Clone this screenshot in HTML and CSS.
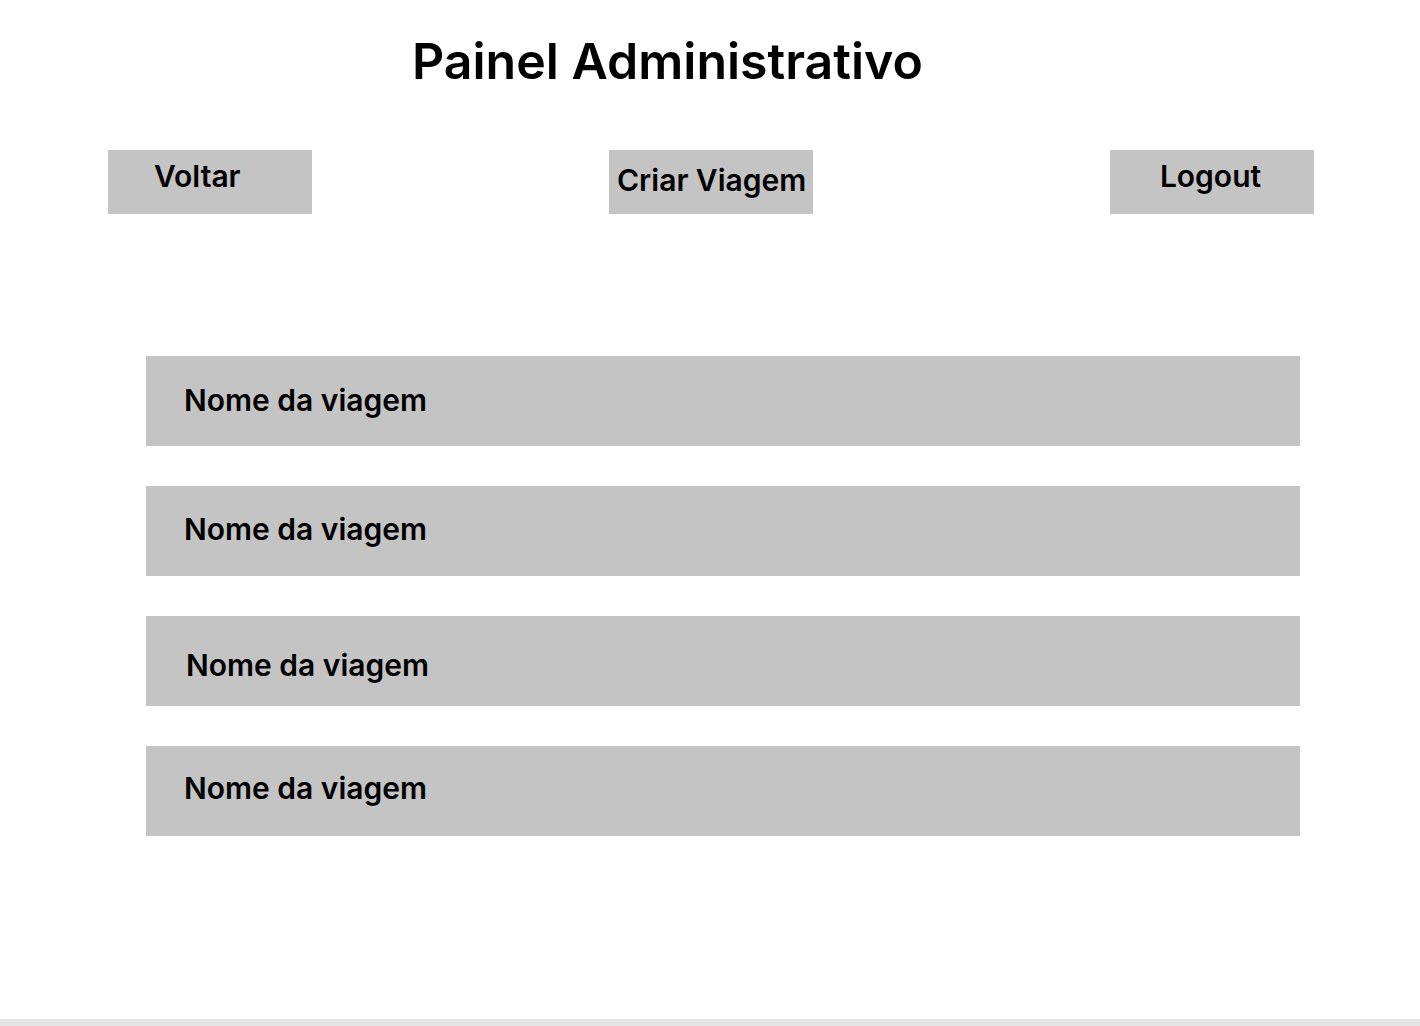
FILE: index.html
```html
<!DOCTYPE html>
<html lang="pt">
<head>
<meta charset="utf-8">
<title>Painel Administrativo</title>
<link rel="stylesheet" href="styles.css">
</head>
<body>
<div class="frame">
  <h1 class="title">Painel Administrativo</h1>
  <div class="actions">
    <button class="btn btn-voltar">Voltar</button>
    <button class="btn btn-criar">Criar Viagem</button>
    <button class="btn btn-logout">Logout</button>
  </div>
  <ul class="trips">
    <li class="trip trip-a">Nome da viagem</li>
    <li class="trip trip-b">Nome da viagem</li>
    <li class="trip trip-c">Nome da viagem</li>
    <li class="trip trip-d">Nome da viagem</li>
  </ul>
</div>
</body>
</html>
```

FILE: styles.css
```css
html, body {
  margin: 0;
  padding: 0;
}
body {
  background: #e5e5e5;
  font-family: Inter, "Noto Sans", sans-serif;
  color: #000;
}
.frame {
  background: #fff;
  height: 1019px;
  display: flex;
  flex-direction: column;
}
.title {
  margin: 31px 0 0 412px;
  font-size: 50px;
  font-weight: 600;
  line-height: 60px;
}
.actions {
  display: flex;
  gap: 297px;
  margin: 59px 0 0 108px;
}
.btn {
  width: 204px;
  height: 64px;
  border: none;
  background: #c4c4c4;
  font-family: Inter, "Noto Sans", sans-serif;
  font-size: 30px;
  font-weight: 600;
  line-height: 36px;
  color: #000;
  padding: 0;
  display: flex;
  align-items: flex-start;
  justify-content: center;
}
.btn-voltar { padding: 8px 0 0 46px; justify-content: flex-start; }
.btn-criar { padding: 12px 0 0 8px; justify-content: flex-start; }
.btn-logout { padding: 8px 3px 0 0; }
.trips {
  list-style: none;
  margin: 142px 0 0 146px;
  padding: 0;
  display: flex;
  flex-direction: column;
  gap: 40px;
}
.trip {
  width: 1154px;
  height: 90px;
  background: #c4c4c4;
  box-sizing: border-box;
  font-size: 30px;
  font-weight: 600;
  line-height: 36px;
  padding-left: 38px;
}
.trip-a { padding-top: 26px; }
.trip-b { padding-top: 25px; }
.trip-c { padding-top: 31px; padding-left: 40px; }
.trip-d { padding-top: 24px; }
```
